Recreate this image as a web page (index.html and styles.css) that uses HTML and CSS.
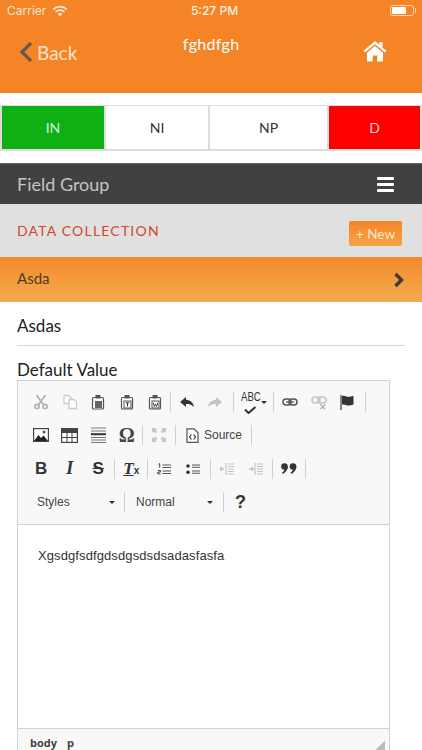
FILE: index.html
```html
<!DOCTYPE html>
<html lang="en">
<head>
    <meta charset="UTF-8">
    <meta name="viewport" content="width=device-width, initial-scale=1.0">
    <title>Field Group</title>
    <link rel="stylesheet" href="styles.css">
</head>
<body>
    <div class="header">
        <div class="status-bar">
            <div class="status-left">
                <span>Carrier</span>
                <svg class="wifi" viewBox="0 0 16 12" width="16" height="12"><path d="M8 11.5 5.6 8.9a3.4 3.4 0 0 1 4.8 0z" fill="#fbe3cf"/><path d="M3.6 6.9a6.2 6.2 0 0 1 8.8 0" fill="none" stroke="#fbe3cf" stroke-width="1.7"/><path d="M1.2 4.4a9.6 9.6 0 0 1 13.6 0" fill="none" stroke="#fbe3cf" stroke-width="1.7"/></svg>
            </div>
            <span class="status-time">5:27 PM</span>
            <div class="battery"><div class="battery-level"></div></div>
        </div>
        <div class="nav">
            <div class="back">
                <svg viewBox="0 0 14 22" width="14" height="22"><path d="M12 2 3 11l9 9" fill="none" stroke="#6b5a4a" stroke-width="3.4"/></svg>
                <span>Back</span>
            </div>
            <div class="nav-title">fghdfgh</div>
            <svg class="home" viewBox="0 0 24 22" width="24" height="22"><path d="M12 1 0.5 10.8 2 12.6 12 4.2 22 12.6 23.5 10.8 19.5 7.4V2h-3.2v2.7z" fill="#fff"/><path d="M12 6 4 12.7V21.5h5.8v-6h4.4v6H20V12.7z" fill="#fff"/></svg>
        </div>
    </div>

    <div class="tabs">
        <div class="tab tab-green">IN</div>
        <div class="tab">NI</div>
        <div class="tab tab-wide">NP</div>
        <div class="tab tab-red">D</div>
    </div>

    <div class="group-bar">
        <span>Field Group</span>
        <div class="burger"><i></i><i></i><i></i></div>
    </div>

    <div class="collection-bar">
        <span class="collection-title">DATA COLLECTION</span>
        <span class="new-btn">+ New</span>
    </div>

    <div class="item-bar">
        <span>Asda</span>
        <svg viewBox="0 0 12 16" width="12" height="16"><path d="M2.5 2 8.5 8l-6 6" fill="none" stroke="#3d3a38" stroke-width="3.4"/></svg>
    </div>

    <div class="field">
        <div class="field-value">Asdas</div>
    </div>
    <div class="field-label">Default Value</div>

    <div class="editor">
        <div class="toolbar">
            <div class="tb-row">
                <span class="btn off"><svg viewBox="0 0 16 16" width="16" height="16"><g fill="none" stroke="#b4b4b4" stroke-width="1.8"><circle cx="4" cy="12.6" r="2.1"/><circle cx="12" cy="12.6" r="2.1"/><path d="M3.5 1 10.6 10.8M12.5 1 5.4 10.8"/></g></svg></span>
                <span class="btn off"><svg viewBox="0 0 16 16" width="16" height="16"><g fill="#fff" stroke="#cccccc" stroke-width="1.3"><path d="M2 1.500h5l2 2v6H2z"/><path d="M7 5.500h5l2.500 2.500v6.500H7z"/></g></svg></span>
                <span class="btn"><svg viewBox="0 0 16 16" width="16" height="16"><path d="M3.500 3.500h9a1 1 0 0 1 1 1v9.500a1 1 0 0 1-1 1h-9a1 1 0 0 1-1-1V4.500a1 1 0 0 1 1-1z" fill="#fff" stroke="#555" stroke-width="1.200"/><rect x="5.500" y="1" width="5" height="3.500" fill="#555"/><rect x="5" y="7" width="7" height="7" fill="#666"/></svg></span>
                <span class="btn"><svg viewBox="0 0 16 16" width="16" height="16"><path d="M3.500 3.500h9a1 1 0 0 1 1 1v9.500a1 1 0 0 1-1 1h-9a1 1 0 0 1-1-1V4.500a1 1 0 0 1 1-1z" fill="#fff" stroke="#555" stroke-width="1.200"/><rect x="5.500" y="1" width="5" height="3.500" fill="#555"/><rect x="5" y="7" width="7" height="7" fill="#fff" stroke="#555"/><path d="M6.800 8.800h3.400M8.500 8.800v3.700" stroke="#333" fill="none"/></svg></span>
                <span class="btn"><svg viewBox="0 0 16 16" width="16" height="16"><path d="M3.500 3.500h9a1 1 0 0 1 1 1v9.500a1 1 0 0 1-1 1h-9a1 1 0 0 1-1-1V4.500a1 1 0 0 1 1-1z" fill="#fff" stroke="#555" stroke-width="1.200"/><rect x="5.500" y="1" width="5" height="3.500" fill="#555"/><rect x="5" y="7" width="7" height="7" fill="#fff" stroke="#555"/><path d="M6.300 8.800 7.300 12.500 8.500 10 9.700 12.500 10.700 8.800" stroke="#333" fill="none" stroke-width=".9"/></svg></span>
                <span class="sep sep-first"></span>
                <span class="btn"><svg viewBox="0 0 16 16" width="16" height="16"><path d="M7 3 1 8l6 5V10c3 0 5.500.5 8 3-.5-4-3.500-7-8-7.200z" fill="#333"/></svg></span>
                <span class="btn off"><svg viewBox="0 0 16 16" width="16" height="16"><path d="M9 3l6 5-6 5V10c-3 0-5.500.5-8 3 .5-4 3.500-7 8-7.200z" fill="#c4c4c4"/></svg></span>
                <span class="sep sep-mid"></span>
                <span class="btn-drop">
                    <svg class="spell-check" viewBox="0 0 14 8" width="14" height="8"><path d="M2 3.500 5.500 7 12.500 1" fill="none" stroke="#333" stroke-width="2"/></svg>
                    <span class="abc">ABC</span>
                    <i class="caret"></i>
                </span>
                <span class="sep sep-spell"></span>
                <span class="btn"><svg viewBox="0 0 16 16" width="16" height="16"><g fill="none" stroke="#555" stroke-width="1.500"><rect x="1" y="5" width="8" height="6" rx="3"/><rect x="7" y="5" width="8" height="6" rx="3"/></g><path d="M4 8h8" stroke="#555" stroke-width="1.300"/></svg></span>
                <span class="btn off"><svg viewBox="0 0 16 16" width="16" height="16"><g fill="none" stroke="#c4c4c4" stroke-width="1.600"><rect x="1" y="3" width="8" height="6" rx="3"/><rect x="7" y="3" width="8" height="6" rx="3"/></g><path d="M9.500 10.500 14 15M14 10.500 9.500 15" stroke="#b4b4b4" stroke-width="1.500"/></svg></span>
                <span class="btn"><svg viewBox="0 0 16 16" width="16" height="16"><path d="M2 1v15" stroke="#555" stroke-width="1.400"/><path d="M3 2c2.500-1 4 .8 6 .8 2 0 3.500-.4 5.500-.8v8.500c-2 .8-3.500 1-5.500 1-2 0-3.500-1.500-6-.8z" fill="#333"/></svg></span>
                <span class="sep sep-mid"></span>
            </div>

            <div class="tb-row">
                <span class="btn"><svg viewBox="0 0 16 14" width="16" height="14"><rect x=".6" y=".6" width="14.800" height="12.800" fill="#fff" stroke="#444" stroke-width="1.200"/><path d="M1 13 5.500 7l2.500 3 2.500-2.500L15 13z" fill="#222"/><circle cx="11" cy="4" r="1.500" fill="#555"/></svg></span>
                <span class="btn"><svg viewBox="0 0 17 15" width="17" height="15"><rect x=".6" y=".6" width="15.800" height="13.800" fill="#fff" stroke="#444" stroke-width="1.200"/><rect x="1" y="1" width="15" height="4" fill="#444"/><path d="M1 9.500h15M6 5v9M11 5v9" stroke="#444"/></svg></span>
                <span class="btn"><svg viewBox="0 0 15 16" width="15" height="16"><path d="M0 1h15M0 4h15M0 10.500h15M0 13h15M0 15.500h15" stroke="#777" stroke-width="1"/><path d="M0 7.200h15" stroke="#333" stroke-width="2"/></svg></span>
                <span class="btn omega">Ω</span>
                <span class="sep"></span>
                <span class="btn off"><svg viewBox="0 0 16 16" width="16" height="16"><g fill="#c6c6c6"><path d="M1 1h5L4.500 2.500 6.500 4.500 4.500 6.500 2.500 4.500 1 6z"/><path d="M15 1v5l-1.500-1.500-2 2-2-2 2-2L10 1z"/><path d="M1 15v-5l1.500 1.500 2-2 2 2-2 2L6 15z"/><path d="M15 15h-5l1.500-1.500-2-2 2-2 2 2L15 10z"/></g></svg></span>
                <span class="sep"></span>
                <span class="btn-source">
                    <svg viewBox="0 0 13 15" width="13" height="15"><path d="M1 .8h7l4 4v9.500H1z" fill="#fff" stroke="#555" stroke-width="1.200"/><path d="M5.500 6.500 3.500 9l2 2.500M7.500 6.500l2 2.500-2 2.500" fill="none" stroke="#333" stroke-width="1.200"/></svg>
                    <span>Source</span>
                </span>
                <span class="sep"></span>
            </div>

            <div class="tb-row">
                <span class="btn btn-b">B</span>
                <span class="btn btn-i">I</span>
                <span class="btn btn-s">S</span>
                <span class="sep sep-fmt"></span>
                <span class="btn btn-tx"><span>T</span><sub>x</sub></span>
                <span class="sep sep-fmt"></span>
                <span class="btn"><svg viewBox="0 0 14 12" width="14" height="12"><path d="M5.500 2h8.500M5.500 4.500h8.500M5.500 8h8.500M5.500 10.500h8.500" stroke="#555" stroke-width="1.100"/><path d="M1.500 1.300 2.700.6v4.200M.8 7.500h2.600v1.600H.8v1.800h2.800" fill="none" stroke="#333" stroke-width=".9"/></svg></span>
                <span class="btn"><svg viewBox="0 0 14 12" width="14" height="12"><circle cx="2" cy="3" r="1.800" fill="#333"/><circle cx="2" cy="9.200" r="1.800" fill="#333"/><path d="M6 2h8M6 4.200h8M6 8h8M6 10.300h8" stroke="#555" stroke-width="1.100"/></svg></span>
                <span class="sep sep-fmt sep-list"></span>
                <span class="btn off"><svg viewBox="0 0 14 14" width="14" height="14"><path d="M6 1v12" stroke="#bbb"/><path d="M8 2h6M8 4.500h6M8 7h6M8 9.500h6M8 12h6" stroke="#c4c4c4"/><path d="M0 7h4M2 5 0 7l2 2" stroke="#aaa" fill="none"/></svg></span>
                <span class="btn off"><svg viewBox="0 0 14 14" width="14" height="14"><path d="M6 1v12" stroke="#bbb"/><path d="M8 2h6M8 4.500h6M8 7h6M8 9.500h6M8 12h6" stroke="#c4c4c4"/><path d="M0 7h4M2.500 5l2 2-2 2" stroke="#aaa" fill="none"/></svg></span>
                <span class="sep sep-fmt"></span>
                <span class="btn"><svg viewBox="0 0 16 11" width="16" height="11"><g fill="#333"><circle cx="3.500" cy="3.500" r="3.300"/><path d="M6.800 3.500C6.800 7.500 4 10 1.500 10.800L1 9.800c1.500-.8 2.500-2.300 2.500-4z"/><circle cx="12" cy="3.500" r="3.300"/><path d="M15.300 3.500c0 4-2.800 6.500-5.300 7.300l-.5-1c1.500-.8 2.500-2.300 2.500-4z"/></g></svg></span>
                <span class="sep sep-fmt"></span>
            </div>

            <div class="tb-row tb-row-combo">
                <span class="combo combo-styles"><span>Styles</span><i class="caret"></i></span>
                <span class="sep sep-combo"></span>
                <span class="combo combo-format"><span>Normal</span><i class="caret"></i></span>
                <span class="sep sep-combo"></span>
                <span class="help">?</span>
            </div>
        </div>

        <div class="editor-body">Xgsdgfsdfgdsdgsdsdsadasfasfa</div>

        <div class="path-bar">
            <span>body</span>
            <span>p</span>
            <i class="resizer"></i>
        </div>
    </div>
</body>
</html>
```

FILE: styles.css
```css
* {
    margin: 0;
    padding: 0;
    box-sizing: border-box;
}

html, body {
    height: 750px;
    overflow: hidden;
}

body {
    background-color: white;
    font-family: 'Lato', sans-serif;
    color: #222;
}

.header {
    height: 93px;
    background-color: #f58426;
    color: #fff;
}

.status-bar {
    height: 21px;
    padding: 0 8px 0 7px;
    display: flex;
    align-items: center;
    justify-content: space-between;
    font-family: 'Inter', sans-serif;
    font-size: 12px;
    color: #fbe3cf;
}

.status-left {
    display: flex;
    align-items: center;
    gap: 6px;
    width: 128px;
}

.status-time {
    color: #fdeee2;
    font-weight: 500;
    margin-right: 96px;
}

.battery {
    position: relative;
    width: 24px;
    height: 11px;
    border: 1px solid #fbd3b0;
    border-radius: 3px;
    padding: 1px;
}

.battery::after {
    content: '';
    position: absolute;
    right: -3px;
    top: 2px;
    width: 1px;
    height: 5px;
    background-color: #fbd3b0;
}

.battery-level {
    width: 14px;
    height: 7px;
    background-color: #fff;
    border-radius: 1px;
}

.nav {
    display: flex;
    justify-content: space-between;
    padding: 0 35px 0 19px;
    height: 72px;
}

.back {
    display: flex;
    align-items: center;
    gap: 4px;
    height: 22px;
    margin-top: 20px;
    font-size: 19px;
    color: #fde3c8;
}

.nav-title {
    font-size: 16px;
    margin-top: 13px;
    margin-right: 18px;
    letter-spacing: 0.3px;
}

.home {
    margin-top: 19px;
}

.tabs {
    margin-top: 12px;
    height: 46px;
    display: flex;
    gap: 2px;
    padding: 1px 2px 2px;
    background-color: #dcdcdc;
}

.tab {
    width: 102px;
    display: flex;
    align-items: center;
    justify-content: center;
    background-color: white;
    font-size: 14px;
    color: #333;
}

.tab-wide {
    width: 117px;
}

.tab-green {
    background-color: #0fb014;
    color: #d4f2d4;
}

.tab-red {
    width: 91px;
    background-color: #ff0000;
    color: #ffd4d4;
}

.group-bar {
    margin-top: 12px;
    height: 41px;
    background-color: #414042;
    border-top: 1px solid #6a6a6a;
    padding: 0 28px 0 17px;
    display: flex;
    align-items: center;
    justify-content: space-between;
    font-size: 18px;
    color: #c4c4c4;
}

.burger {
    width: 17px;
    display: flex;
    flex-direction: column;
    gap: 3px;
}

.burger i {
    height: 3px;
    background-color: white;
    border-radius: 1px;
}

.collection-bar {
    height: 53px;
    background-color: #e0e0e0;
    padding: 0 20px 0 17px;
    display: flex;
    align-items: center;
    justify-content: space-between;
}

.collection-title {
    font-size: 14px;
    letter-spacing: 1.2px;
    color: #d0492a;
    margin-top: -1px;
}

.new-btn {
    width: 53px;
    height: 25px;
    margin-top: 6px;
    background: linear-gradient(#f58426, #f3a548);
    border-radius: 2px;
    color: #fde8d2;
    font-size: 13.5px;
    display: flex;
    align-items: center;
    justify-content: center;
}

.item-bar {
    height: 45px;
    background: linear-gradient(#f58a28, #f2ab50);
    padding: 0 17px;
    display: flex;
    align-items: center;
    justify-content: space-between;
    font-size: 15px;
    color: #4f3d2b;
}

.item-bar span {
    margin-top: -3px;
}

.field {
    margin: 0 17px;
    height: 44px;
    border-bottom: 1.5px solid #d4d4d4;
    display: flex;
    align-items: center;
}

.field-value {
    font-size: 17px;
    margin-top: 3px;
}

.field-label {
    margin: 14px 17px 0;
    height: 20px;
    font-size: 17px;
    line-height: 20px;
}

.editor {
    margin-left: 17px;
    width: 373px;
    height: 385px;
    border: 1px solid #d1d1d1;
    background-color: white;
    display: flex;
    flex-direction: column;
}

.toolbar {
    height: 144px;
    flex: none;
    background-color: #f8f8f8;
    border-bottom: 1px solid #d1d1d1;
    padding: 4px 0 0 9px;
}

.tb-row {
    height: 33.5px;
    display: flex;
    align-items: center;
}

.btn {
    width: 28.5px;
    height: 20px;
    flex: none;
    display: flex;
    align-items: center;
    justify-content: center;
    color: #333;
}

.sep {
    width: 1px;
    height: 20px;
    flex: none;
    background-color: #d1d1d1;
    margin: 0 2px 0 1px;
}

.sep-first {
    margin: 0 2px 0 0;
}

.sep-mid {
    margin: 0 6px 0 3px;
}

.sep-spell {
    margin: 0 2px 0 6.5px;
}

.sep-fmt {
    margin: 0 2px 0 1.5px;
}

.sep-list {
    margin-left: 3px;
}

.sep-combo {
    margin: 0;
}

.btn-drop {
    position: relative;
    width: 27px;
    height: 24px;
    flex: none;
}

.spell-check {
    position: absolute;
    left: 3px;
    bottom: 0;
}

.abc {
    position: absolute;
    top: 0;
    left: 1px;
    font-family: 'Liberation Sans', sans-serif;
    font-size: 12px;
    line-height: 14px;
    color: #333;
    transform: scaleX(0.8);
    transform-origin: left;
}

.caret {
    display: block;
    width: 0;
    height: 0;
    border-left: 3px solid transparent;
    border-right: 3px solid transparent;
    border-top: 3px solid #333;
}

.btn-drop .caret {
    position: absolute;
    right: 0;
    top: 11px;
}

.omega {
    font-family: 'Liberation Serif', serif;
    font-size: 20px;
    font-weight: bold;
    color: #444;
}

.btn-source {
    display: flex;
    align-items: center;
    gap: 5px;
    margin-left: 8.5px;
    margin-right: 8px;
    font-family: 'Liberation Sans', sans-serif;
    font-size: 12px;
    color: #444;
}

.btn-b {
    font-family: 'Liberation Sans', sans-serif;
    font-size: 17px;
    font-weight: bold;
}

.btn-i {
    font-family: 'Liberation Serif', serif;
    font-size: 18px;
    font-weight: bold;
    font-style: italic;
}

.btn-s {
    font-family: 'Liberation Sans', sans-serif;
    font-size: 17px;
    font-weight: bold;
    text-decoration: line-through;
}

.btn-tx {
    font-family: 'Liberation Serif', serif;
    font-size: 17px;
    font-weight: bold;
    font-style: italic;
    align-items: baseline;
}

.btn-tx span {
    text-decoration: underline;
}

.btn-tx sub {
    font-family: 'Liberation Sans', sans-serif;
    font-size: 10px;
    font-style: normal;
    line-height: 1;
}

.combo {
    display: flex;
    align-items: center;
    justify-content: space-between;
    font-family: 'Liberation Sans', sans-serif;
    font-size: 12px;
    color: #444;
}

.combo-styles {
    width: 87px;
    margin-left: 10px;
    padding-right: 9px;
}

.combo-format {
    width: 87px;
    margin-left: 11px;
    padding-right: 10px;
}

.help {
    font-family: 'Liberation Sans', sans-serif;
    font-size: 18px;
    font-weight: bold;
    color: #333;
    margin-left: 11px;
}

.editor-body {
    flex: 1;
    padding: 22px 20px;
    font-family: 'Liberation Sans', sans-serif;
    font-size: 13px;
    letter-spacing: 0.1px;
    line-height: 18px;
    color: #333;
}

.path-bar {
    height: 36px;
    flex: none;
    position: relative;
    background-color: #f8f8f8;
    border-top: 1px solid #d1d1d1;
    padding: 7px 0 0 12px;
    display: flex;
    gap: 10px;
    font-family: 'Open Sans', sans-serif;
    font-size: 11px;
    font-weight: 700;
    line-height: 13px;
    color: #444;
}

.resizer {
    position: absolute;
    right: 4px;
    top: 12px;
    width: 9px;
    height: 9px;
    background: linear-gradient(135deg, transparent 50%, #bdbdbd 50%);
}
```
